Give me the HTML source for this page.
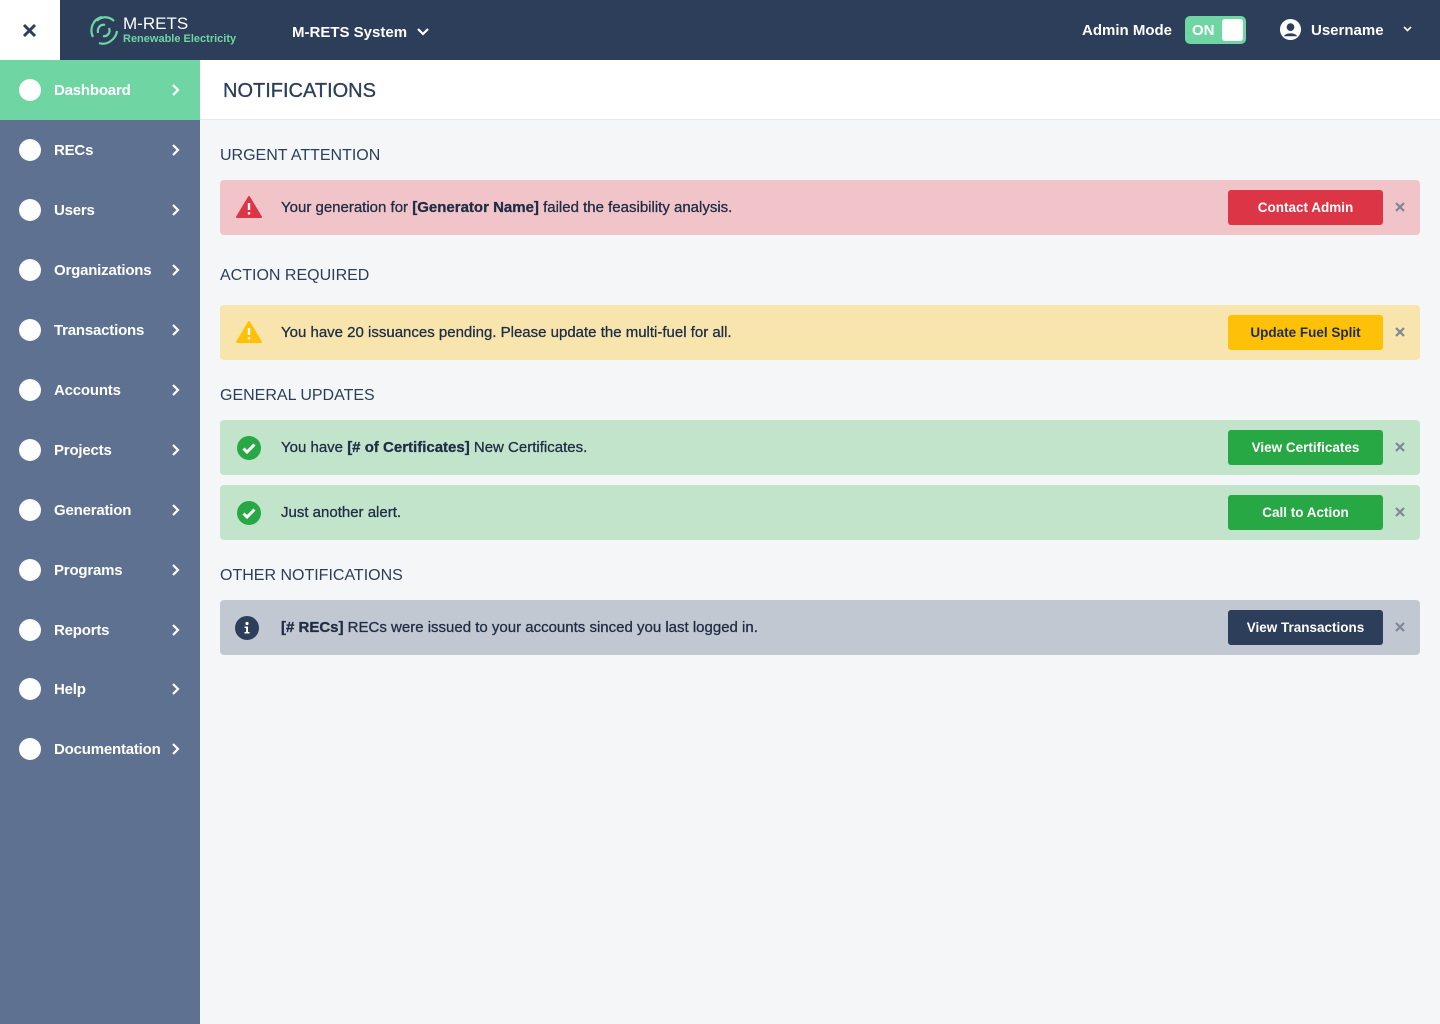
<!DOCTYPE html>
<html><head><meta charset="utf-8"><style>
*{box-sizing:border-box;margin:0;padding:0}
body{width:1440px;height:1024px;overflow:hidden;font-family:"Liberation Sans",sans-serif;background:#f5f6f8;position:relative;color:#1f2d45}
.top{position:absolute;left:0;top:0;width:1440px;height:60px;background:#2c3e5a;color:#fff}
.xbox{position:absolute;left:0;top:0;width:60px;height:60px;background:#fff}
.side{position:absolute;left:0;top:60px;width:200px;height:964px;background:#5e7190}
.item{position:absolute;left:0;width:200px;height:60px;color:#fff;font-size:15px;font-weight:bold}
.item .c{position:absolute;left:19px;top:19px;width:22px;height:22px;border-radius:50%;background:#fff}
.item .t{position:absolute;left:54px;top:22px;letter-spacing:-0.2px}
.item svg{position:absolute;left:171px;top:23px}
.main{position:absolute;left:200px;top:60px;width:1240px;height:60px;background:#fff;border-bottom:1px solid #e3e6ea}
.h{position:absolute;left:220px;font-size:16px;color:#2c3e5a}
.al{position:absolute;left:220px;width:1200px;height:55px;border-radius:4px;font-size:15px}
.al .ic{position:absolute;left:16px;top:15px}
.al .m{position:absolute;left:61px;top:19px;-webkit-text-stroke:0.3px #1f2d45}
.al .b{position:absolute;left:1008px;top:10px;width:155px;height:35px;border-radius:3px;font-size:13.5px;font-weight:bold;text-align:center;line-height:35px}
.al .x{position:absolute;left:1174px;top:21px}
</style></head><body>
<div class="top">
<div class="xbox"><svg style="position:absolute;left:22px;top:23px" width="15" height="15" viewBox="0 0 15 15"><path d="M2 2L13 13M13 2L2 13" stroke="#2c3e5a" stroke-width="3"/></svg></div>
<svg style="position:absolute;left:87px;top:13px" width="34" height="34" viewBox="0 0 34 34" fill="none" stroke="#6fd6a3" stroke-width="2.2"><path d="M6 24C2 16 6 6 15 4"/><path d="M12 30C20 33 29 26 30 18"/><path d="M27 8C22 3 14 3 10 8"/><path d="M11 20C10 14 14 11 18 12"/><path d="M22 15C24 20 20 24 16 23"/></svg>
<div style="position:absolute;left:123px;top:14px;font-size:17px;color:#fff">M-RETS</div>
<div style="position:absolute;left:123px;top:33px;font-size:11px;color:#6fd6a3;font-weight:bold">Renewable Electricity</div>
<div style="position:absolute;left:292px;top:24px;font-size:15px;font-weight:bold">M-RETS System</div>
<svg style="position:absolute;left:417px;top:28px" width="12" height="8" viewBox="0 0 12 8"><path d="M1 1L6 6L11 1" stroke="#fff" stroke-width="2.2" fill="none"/></svg>
<div style="position:absolute;left:1082px;top:22px;font-size:15px;font-weight:bold">Admin Mode</div>
<div style="position:absolute;left:1185px;top:16px;width:61px;height:28px;border-radius:5px;background:#6fd6a3"><span style="position:absolute;left:7px;top:6px;font-size:15px;font-weight:bold">ON</span><div style="position:absolute;left:37px;top:3px;width:21px;height:22px;border-radius:3px;background:#fff"></div></div>
<svg style="position:absolute;left:1279px;top:18px" width="23" height="23" viewBox="0 0 24 24"><circle cx="12" cy="12" r="11" fill="#fff"/><circle cx="12" cy="9.5" r="4" fill="#2c3e5a"/><path d="M5 19C7 15 17 15 19 19" fill="#2c3e5a"/></svg>
<div style="position:absolute;left:1311px;top:22px;font-size:15px;font-weight:bold">Username</div>
<svg style="position:absolute;left:1403px;top:26px" width="9" height="6" viewBox="0 0 9 6"><path d="M1 1L4.5 4.5L8 1" stroke="#fff" stroke-width="1.6" fill="none"/></svg>
</div>
<div class="side">
<div class="item" style="top:0;background:#6fd6a3"><div class="c"></div><div class="t">Dashboard</div><svg width="10" height="14" viewBox="0 0 10 14"><path d="M2 2L7 7L2 12" stroke="#fff" stroke-width="2.2" fill="none"/></svg></div>
<div class="item" style="top:60px"><div class="c"></div><div class="t">RECs</div><svg width="10" height="14" viewBox="0 0 10 14"><path d="M2 2L7 7L2 12" stroke="#fff" stroke-width="2.2" fill="none"/></svg></div>
<div class="item" style="top:120px"><div class="c"></div><div class="t">Users</div><svg width="10" height="14" viewBox="0 0 10 14"><path d="M2 2L7 7L2 12" stroke="#fff" stroke-width="2.2" fill="none"/></svg></div>
<div class="item" style="top:180px"><div class="c"></div><div class="t">Organizations</div><svg width="10" height="14" viewBox="0 0 10 14"><path d="M2 2L7 7L2 12" stroke="#fff" stroke-width="2.2" fill="none"/></svg></div>
<div class="item" style="top:240px"><div class="c"></div><div class="t">Transactions</div><svg width="10" height="14" viewBox="0 0 10 14"><path d="M2 2L7 7L2 12" stroke="#fff" stroke-width="2.2" fill="none"/></svg></div>
<div class="item" style="top:300px"><div class="c"></div><div class="t">Accounts</div><svg width="10" height="14" viewBox="0 0 10 14"><path d="M2 2L7 7L2 12" stroke="#fff" stroke-width="2.2" fill="none"/></svg></div>
<div class="item" style="top:360px"><div class="c"></div><div class="t">Projects</div><svg width="10" height="14" viewBox="0 0 10 14"><path d="M2 2L7 7L2 12" stroke="#fff" stroke-width="2.2" fill="none"/></svg></div>
<div class="item" style="top:420px"><div class="c"></div><div class="t">Generation</div><svg width="10" height="14" viewBox="0 0 10 14"><path d="M2 2L7 7L2 12" stroke="#fff" stroke-width="2.2" fill="none"/></svg></div>
<div class="item" style="top:480px"><div class="c"></div><div class="t">Programs</div><svg width="10" height="14" viewBox="0 0 10 14"><path d="M2 2L7 7L2 12" stroke="#fff" stroke-width="2.2" fill="none"/></svg></div>
<div class="item" style="top:540px"><div class="c"></div><div class="t">Reports</div><svg width="10" height="14" viewBox="0 0 10 14"><path d="M2 2L7 7L2 12" stroke="#fff" stroke-width="2.2" fill="none"/></svg></div>
<div class="item" style="top:599px"><div class="c"></div><div class="t">Help</div><svg width="10" height="14" viewBox="0 0 10 14"><path d="M2 2L7 7L2 12" stroke="#fff" stroke-width="2.2" fill="none"/></svg></div>
<div class="item" style="top:659px"><div class="c"></div><div class="t">Documentation</div><svg width="10" height="14" viewBox="0 0 10 14"><path d="M2 2L7 7L2 12" stroke="#fff" stroke-width="2.2" fill="none"/></svg></div>
</div>
<div class="main"><div style="position:absolute;left:23px;top:20px;font-size:20px;color:#2c3e5a;-webkit-text-stroke:0.3px #2c3e5a">NOTIFICATIONS</div></div>

<div class="h" style="top:147px">URGENT ATTENTION</div>
<div class="al" style="top:180px;background:#f0c4c8">
<svg class="ic" width="26" height="22" viewBox="0 0 26 22" style="top:16px"><path d="M13 1L25 21H1Z" fill="#dc3545" stroke="#dc3545" stroke-linejoin="round" stroke-width="2"/><path d="M13 7V14" stroke="#fff" stroke-width="2.4"/><circle cx="13" cy="17.3" r="1.3" fill="#fff"/></svg>
<div class="m">Your generation for <b>[Generator Name]</b> failed the feasibility analysis.</div>
<div class="b" style="background:#dc3545;color:#fff">Contact Admin</div>
<svg class="x" width="12" height="12" viewBox="0 0 12 12"><path d="M2 2L10 10M10 2L2 10" stroke="#7d8796" stroke-width="2.2"/></svg>
</div>

<div class="h" style="top:267px">ACTION REQUIRED</div>
<div class="al" style="top:305px;background:#f8e5ad">
<svg class="ic" width="26" height="22" viewBox="0 0 26 22" style="top:16px"><path d="M13 1L25 21H1Z" fill="#ffc107" stroke="#ffc107" stroke-linejoin="round" stroke-width="2"/><path d="M13 7V14" stroke="#fff" stroke-width="2.4"/><circle cx="13" cy="17.3" r="1.3" fill="#fff"/></svg>
<div class="m">You have 20 issuances pending. Please update the multi-fuel for all.</div>
<div class="b" style="background:#ffc107;color:#1f2d45">Update Fuel Split</div>
<svg class="x" width="12" height="12" viewBox="0 0 12 12"><path d="M2 2L10 10M10 2L2 10" stroke="#7d8796" stroke-width="2.2"/></svg>
</div>

<div class="h" style="top:387px">GENERAL UPDATES</div>
<div class="al" style="top:420px;background:#c2e4cb">
<svg class="ic" width="26" height="26" viewBox="0 0 26 26"><circle cx="13" cy="13" r="12" fill="#28a745"/><path d="M7.5 13.5L11 17L18.5 9.5" stroke="#fff" stroke-width="3" fill="none"/></svg>
<div class="m">You have <b>[# of Certificates]</b> New Certificates.</div>
<div class="b" style="background:#28a745;color:#fff">View Certificates</div>
<svg class="x" width="12" height="12" viewBox="0 0 12 12"><path d="M2 2L10 10M10 2L2 10" stroke="#7d8796" stroke-width="2.2"/></svg>
</div>
<div class="al" style="top:485px;background:#c2e4cb">
<svg class="ic" width="26" height="26" viewBox="0 0 26 26"><circle cx="13" cy="13" r="12" fill="#28a745"/><path d="M7.5 13.5L11 17L18.5 9.5" stroke="#fff" stroke-width="3" fill="none"/></svg>
<div class="m">Just another alert.</div>
<div class="b" style="background:#28a745;color:#fff">Call to Action</div>
<svg class="x" width="12" height="12" viewBox="0 0 12 12"><path d="M2 2L10 10M10 2L2 10" stroke="#7d8796" stroke-width="2.2"/></svg>
</div>

<div class="h" style="top:567px">OTHER NOTIFICATIONS</div>
<div class="al" style="top:600px;background:#c2c8d2">
<svg class="ic" width="26" height="26" viewBox="0 0 26 26" style="left:14px"><circle cx="13" cy="13" r="12" fill="#2c3e5a"/><circle cx="13" cy="8.5" r="1.6" fill="#fff"/><path d="M10.5 11.5H14V17H15.5V18.5H10.5V17H12V13H10.5Z" fill="#fff"/></svg>
<div class="m"><b>[# RECs]</b> RECs were issued to your accounts sinced you last logged in.</div>
<div class="b" style="background:#2c3e5a;color:#fff">View Transactions</div>
<svg class="x" width="12" height="12" viewBox="0 0 12 12"><path d="M2 2L10 10M10 2L2 10" stroke="#7d8796" stroke-width="2.2"/></svg>
</div>
</body></html>
